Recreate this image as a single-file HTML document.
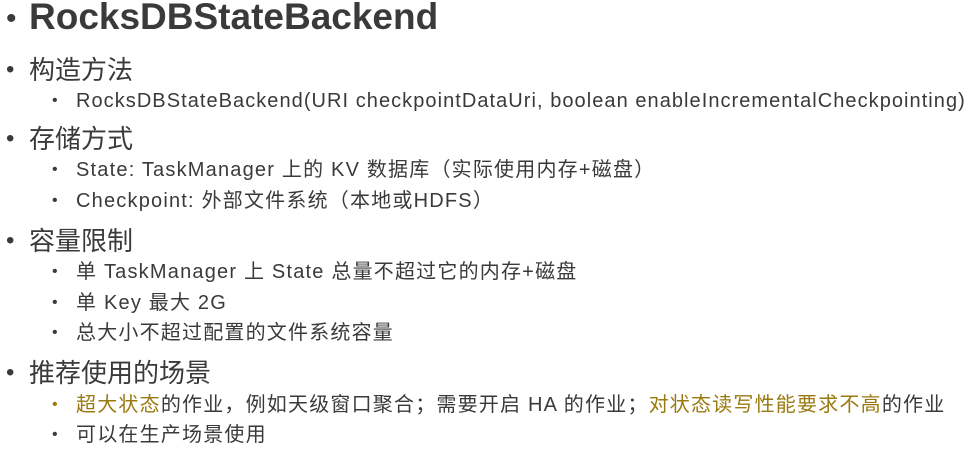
<!DOCTYPE html>
<html><head><meta charset="utf-8"><style>
body{margin:0;width:974px;height:454px;background:#fff;overflow:hidden;position:relative;font-family:"Liberation Sans","Noto Sans CJK SC",sans-serif;color:#3a3a3a}
div{position:absolute;white-space:nowrap;line-height:1}
.t{left:29px;top:-2px;font-size:37px;font-weight:bold}
.l1{left:29px;font-size:26px}
.l2{left:76px;font-size:20px;letter-spacing:1.2px}
.b1{left:6px;font-size:24px}
.b2{left:52px;font-size:16px}
.g{color:#9a7a10}
</style></head><body>
<div class="b1" style="top:4px;font-size:30px">•</div>
<div class="t">RocksDBStateBackend</div>
<div class="b1" style="top:58px">•</div><div class="l1" style="top:57px">构造方法</div>
<div class="b2" style="top:93px">•</div><div class="l2" style="top:91px;letter-spacing:1.05px">RocksDBStateBackend(URI checkpointDataUri, boolean enableIncrementalCheckpointing)</div>
<div class="b1" style="top:127px">•</div><div class="l1" style="top:126px">存储方式</div>
<div class="b2" style="top:162px">•</div><div class="l2" style="top:160px">State: TaskManager 上的 KV 数据库（实际使用内存+磁盘）</div>
<div class="b2" style="top:193px">•</div><div class="l2" style="top:191px">Checkpoint: 外部文件系统（本地或HDFS）</div>
<div class="b1" style="top:229px">•</div><div class="l1" style="top:228px">容量限制</div>
<div class="b2" style="top:264px">•</div><div class="l2" style="top:262px">单 TaskManager 上 State 总量不超过它的内存+磁盘</div>
<div class="b2" style="top:295px">•</div><div class="l2" style="top:293px">单 Key 最大 2G</div>
<div class="b2" style="top:325px">•</div><div class="l2" style="top:323px">总大小不超过配置的文件系统容量</div>
<div class="b1" style="top:361px">•</div><div class="l1" style="top:360px">推荐使用的场景</div>
<div class="b2 g" style="top:397px">•</div><div class="l2" style="top:395px"><span class="g">超大状态</span>的作业，例如天级窗口聚合；需要开启 HA 的作业；<span class="g">对状态读写性能要求不高</span>的作业</div>
<div class="b2" style="top:427px">•</div><div class="l2" style="top:425px">可以在生产场景使用</div>
</body></html>
